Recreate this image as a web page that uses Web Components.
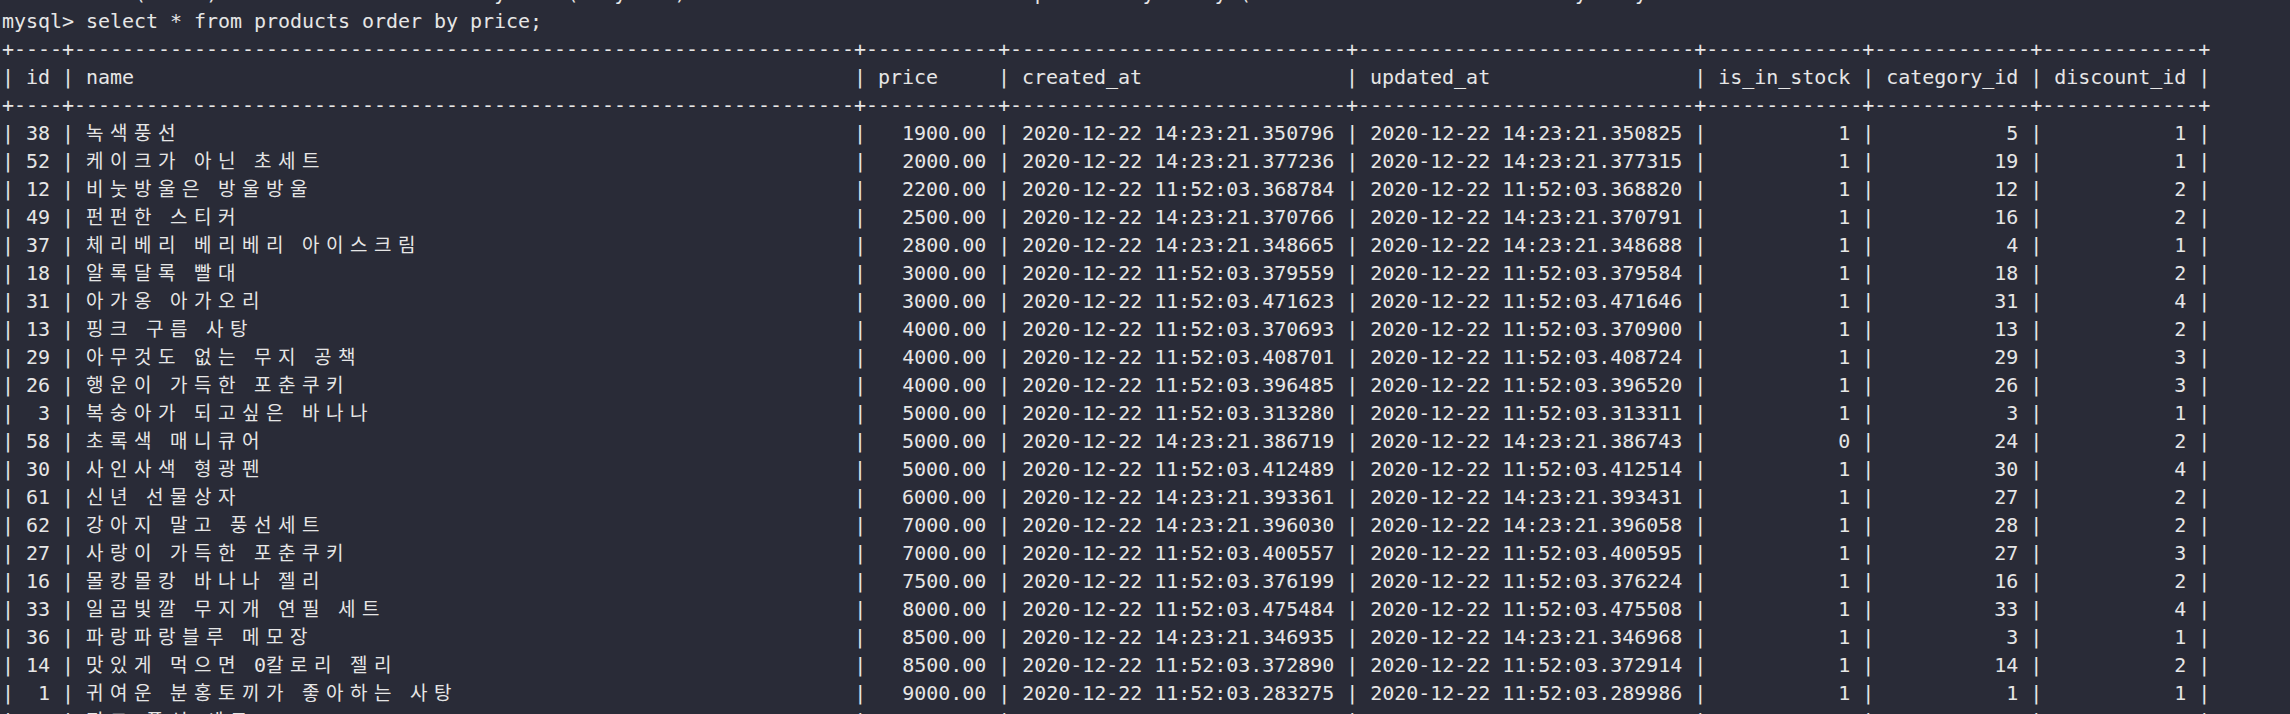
<!DOCTYPE html>
<html lang="ko">
<head>
<meta charset="UTF-8" />
<title>mysql</title>
<style>
  html, body { margin: 0; height: 100%; background: #292b37; overflow: hidden; }
  .faint { color: #85868d; }
</style>
</head>
<body>
<term-screen>
  <term-line id="scrolled"></term-line>
  <term-line>mysql&gt; select * from products order by price;</term-line>
  <sql-result></sql-result>
</term-screen>

<script>
  const COLS = [
    ["id", 2, "r"], ["name", 63, "l"], ["price", 9, "r"], ["created_at", 26, "l"],
    ["updated_at", 26, "l"], ["is_in_stock", 11, "r"], ["category_id", 11, "r"], ["discount_id", 11, "r"],
  ];
  const A = "2020-12-22 14:23:21.", B = "2020-12-22 11:52:03.";
  const ROWS = [
    [38, "녹색풍선", "1900.00", A+"350796", A+"350825", 1, 5, 1],
    [52, "케이크가 아닌 초세트", "2000.00", A+"377236", A+"377315", 1, 19, 1],
    [12, "비눗방울은 방울방울", "2200.00", B+"368784", B+"368820", 1, 12, 2],
    [49, "펀펀한 스티커", "2500.00", A+"370766", A+"370791", 1, 16, 2],
    [37, "체리베리 베리베리 아이스크림", "2800.00", A+"348665", A+"348688", 1, 4, 1],
    [18, "알록달록 빨대", "3000.00", B+"379559", B+"379584", 1, 18, 2],
    [31, "아가옹 아가오리", "3000.00", B+"471623", B+"471646", 1, 31, 4],
    [13, "핑크 구름 사탕", "4000.00", B+"370693", B+"370900", 1, 13, 2],
    [29, "아무것도 없는 무지 공책", "4000.00", B+"408701", B+"408724", 1, 29, 3],
    [26, "행운이 가득한 포춘쿠키", "4000.00", B+"396485", B+"396520", 1, 26, 3],
    [3, "복숭아가 되고싶은 바나나", "5000.00", B+"313280", B+"313311", 1, 3, 1],
    [58, "초록색 매니큐어", "5000.00", A+"386719", A+"386743", 0, 24, 2],
    [30, "사인사색 형광펜", "5000.00", B+"412489", B+"412514", 1, 30, 4],
    [61, "신년 선물상자", "6000.00", A+"393361", A+"393431", 1, 27, 2],
    [62, "강아지 말고 풍선세트", "7000.00", A+"396030", A+"396058", 1, 28, 2],
    [27, "사랑이 가득한 포춘쿠키", "7000.00", B+"400557", B+"400595", 1, 27, 3],
    [16, "몰캉몰캉 바나나 젤리", "7500.00", B+"376199", B+"376224", 1, 16, 2],
    [33, "일곱빛깔 무지개 연필 세트", "8000.00", B+"475484", B+"475508", 1, 33, 4],
    [36, "파랑파랑블루 메모장", "8500.00", A+"346935", A+"346968", 1, 3, 1],
    [14, "맛있게 먹으면 0칼로리 젤리", "8500.00", B+"372890", B+"372914", 1, 14, 2],
    [1, "귀여운 분홍토끼가 좋아하는 사탕", "9000.00", B+"283275", B+"289986", 1, 1, 1],
    [7, "핑크 풍선 세트", "9000.00", B+"291068", B+"291100", 1, 7, 1],
  ];

  customElements.define("term-screen", class extends HTMLElement {
    constructor() {
      super();
      this.attachShadow({ mode: "open" }).innerHTML = `
        <style>
          :host {
            display: block;
            height: 714px;
            overflow: hidden;
            color: #e6e6e6;
            font: 20px/28px "DejaVu Sans Mono", "Noto Sans CJK KR", monospace;
            letter-spacing: -0.04px;
          }
          #inner {
            display: flex;
            flex-direction: column;
            padding-left: 2px;
            margin-top: -21px;
          }
        </style>
        <div id="inner"><slot></slot></div>`;
    }
  });

  customElements.define("term-line", class extends HTMLElement {
    constructor() {
      super();
      this.attachShadow({ mode: "open" }).innerHTML =
        `<style>:host { display: block; height: 28px; white-space: pre; }</style><slot></slot>`;
    }
  });

  // a run of hangul takes two cells per glyph, like in the terminal
  // (Noto's hangul advance is 0.92em, so 19px + 6.52px = 24px)
  // line-height 1 so the CJK metrics don't push the line's baseline down
  customElements.define("wide-text", class extends HTMLElement {
    constructor() {
      super();
      this.attachShadow({ mode: "open" }).innerHTML =
        `<style>:host { display: inline; font-family: "Noto Sans CJK KR", sans-serif; font-size: 19px; line-height: 1; letter-spacing: 6.52px; }</style><slot></slot>`;
    }
  });

  customElements.define("sql-result", class extends HTMLElement {
    constructor() {
      super();
      this.attachShadow({ mode: "open" }).innerHTML =
        `<style>:host { display: flex; flex-direction: column; }</style><slot></slot>`;
    }
    connectedCallback() {
      const rule = "+" + COLS.map((c) => "-".repeat(c[1] + 2)).join("+") + "+";
      this.addLine(rule);
      this.addLine("| " + COLS.map((c) => c[0].padEnd(c[1])).join(" | ") + " |");
      this.addLine(rule);
      for (const row of ROWS) this.addRow(row);
    }
    addLine(text) {
      const line = document.createElement("term-line");
      line.textContent = text;
      this.appendChild(line);
    }
    addRow(row) {
      const line = document.createElement("term-line");
      let pending = "| ";
      COLS.forEach((col, i) => {
        const v = String(row[i]);
        if (col[0] === "name") {
          for (const part of v.split(/([가-힣]+)/)) {
            if (/[가-힣]/.test(part)) {
              line.append(pending);
              pending = "";
              const w = document.createElement("wide-text");
              w.textContent = part;
              line.appendChild(w);
            } else pending += part;
          }
          const used = [...v].reduce((n, ch) => n + (/[가-힣]/.test(ch) ? 2 : 1), 0);
          pending += " ".repeat(col[1] - used);
        } else {
          pending += col[2] === "r" ? v.padStart(col[1]) : v.padEnd(col[1]);
        }
        pending += i < COLS.length - 1 ? " | " : " |";
      });
      line.append(pending);
      this.appendChild(line);
    }
  });

  // the line above the prompt is scrolled off, only the feet of its letters still show
  const feet = { 11: "(", 17: ")", 47: "(", 56: ")", 103: "(", 86: "p",
    41: "y", 51: "y", 95: "y", 101: "y", 131: "y", 136: "y" };
  const dots = [3, 7, 8, 14, 15, 21, 22, 25, 27, 29, 32, 35, 42, 46, 54, 58, 60, 61, 66, 69, 72, 77, 80, 81, 84,
    87, 89, 90, 93, 96, 102, 106, 107, 110, 114, 118, 122, 127, 135, 139, 143, 145, 146, 147, 150, 157, 163];
  const scrolled = document.getElementById("scrolled");
  let gap = "";
  for (let i = 0; i < 164; i++) {
    if (feet[i]) { gap += feet[i]; continue; }
    if (!dots.includes(i)) { gap += " "; continue; }
    scrolled.append(gap);
    gap = "";
    const dot = document.createElement("span");
    dot.className = "faint";
    dot.textContent = ".";
    scrolled.appendChild(dot);
  }
  scrolled.append(gap);
</script>
</body>
</html>
